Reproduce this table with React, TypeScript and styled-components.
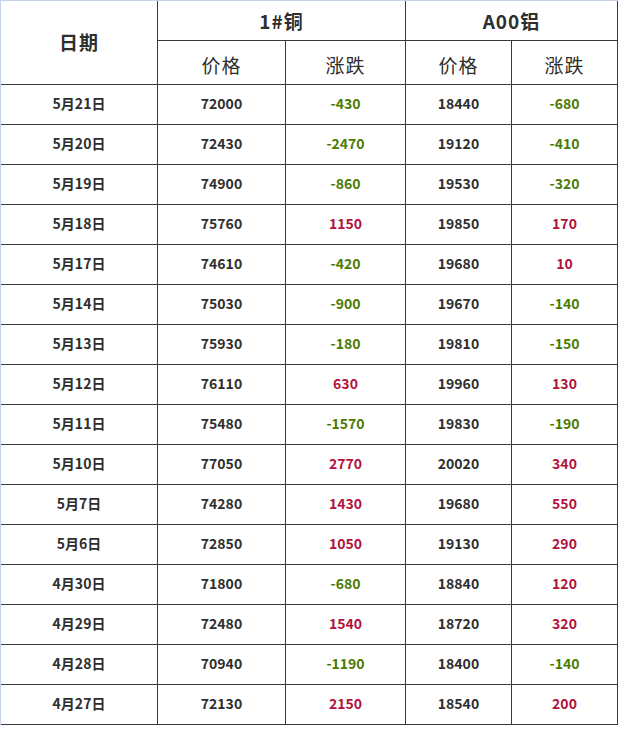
import React from "react";
import styled, { createGlobalStyle } from "styled-components";

const GlobalStyle = createGlobalStyle`
  html, body {
    margin: 0;
    padding: 0;
    background: #ffffff;
  }
  body {
    font-family: "Noto Sans CJK SC", "Noto Sans", sans-serif;
    color: #333333;
  }
`;

const Grid = styled.div`
  display: grid;
  grid-template-columns: 157px 128px 120px 106px 106px;
  grid-template-rows: 40px 44px repeat(16, 40px);
  width: max-content;
  border-left: 1px solid #c6d3e9;
  border-top: 1px solid #c6d3e9;
`;

const Cell = styled.div<{ $rows?: number; $cols?: number }>`
  box-sizing: border-box;
  display: flex;
  align-items: center;
  justify-content: center;
  padding-bottom: 4px;
  border-right: 1px solid #3a3a3a;
  border-bottom: 1px solid #3a3a3a;
  grid-row: span ${(p) => p.$rows ?? 1};
  grid-column: span ${(p) => p.$cols ?? 1};
  font-size: 14px;
  font-weight: 700;
  color: #2e2e2e;
`;

// $shift moves the label down (positive) or up (negative) inside its cell
const Head = styled(Cell)<{ $bold?: boolean; $shift?: number }>`
  padding-bottom: ${(p) => Math.max(0, -(p.$shift ?? 0))}px;
  padding-top: ${(p) => Math.max(0, p.$shift ?? 0)}px;
  font-size: 19px;
  font-weight: ${(p) => (p.$bold ? 700 : 400)};
  letter-spacing: 1px;
`;

const Change = styled(Cell)<{ $up: boolean }>`
  color: ${(p) => (p.$up ? "#b3123d" : "#4b7b00")};
`;

type Row = [string, number, number, number, number];

const rows: Row[] = [
  ["5月21日", 72000, -430, 18440, -680],
  ["5月20日", 72430, -2470, 19120, -410],
  ["5月19日", 74900, -860, 19530, -320],
  ["5月18日", 75760, 1150, 19850, 170],
  ["5月17日", 74610, -420, 19680, 10],
  ["5月14日", 75030, -900, 19670, -140],
  ["5月13日", 75930, -180, 19810, -150],
  ["5月12日", 76110, 630, 19960, 130],
  ["5月11日", 75480, -1570, 19830, -190],
  ["5月10日", 77050, 2770, 20020, 340],
  ["5月7日", 74280, 1430, 19680, 550],
  ["5月6日", 72850, 1050, 19130, 290],
  ["4月30日", 71800, -680, 18840, 120],
  ["4月29日", 72480, 1540, 18720, 320],
  ["4月28日", 70940, -1190, 18400, -140],
  ["4月27日", 72130, 2150, 18540, 200],
];

export default function App() {
  return (
    <>
      <GlobalStyle />
      <Grid>
        <Head $rows={2} $bold $shift={-2}>
          日期
        </Head>
        <Head $cols={2} $bold>
          1#铜
        </Head>
        <Head $cols={2} $bold>
          A00铝
        </Head>
        <Head $shift={4}>价格</Head>
        <Head $shift={4}>涨跌</Head>
        <Head $shift={4}>价格</Head>
        <Head $shift={4}>涨跌</Head>
        {rows.map(([date, cu, cuChg, al, alChg]) => (
          <React.Fragment key={date}>
            <Cell>{date}</Cell>
            <Cell>{cu}</Cell>
            <Change $up={cuChg > 0}>{cuChg}</Change>
            <Cell>{al}</Cell>
            <Change $up={alChg > 0}>{alChg}</Change>
          </React.Fragment>
        ))}
      </Grid>
    </>
  );
}
